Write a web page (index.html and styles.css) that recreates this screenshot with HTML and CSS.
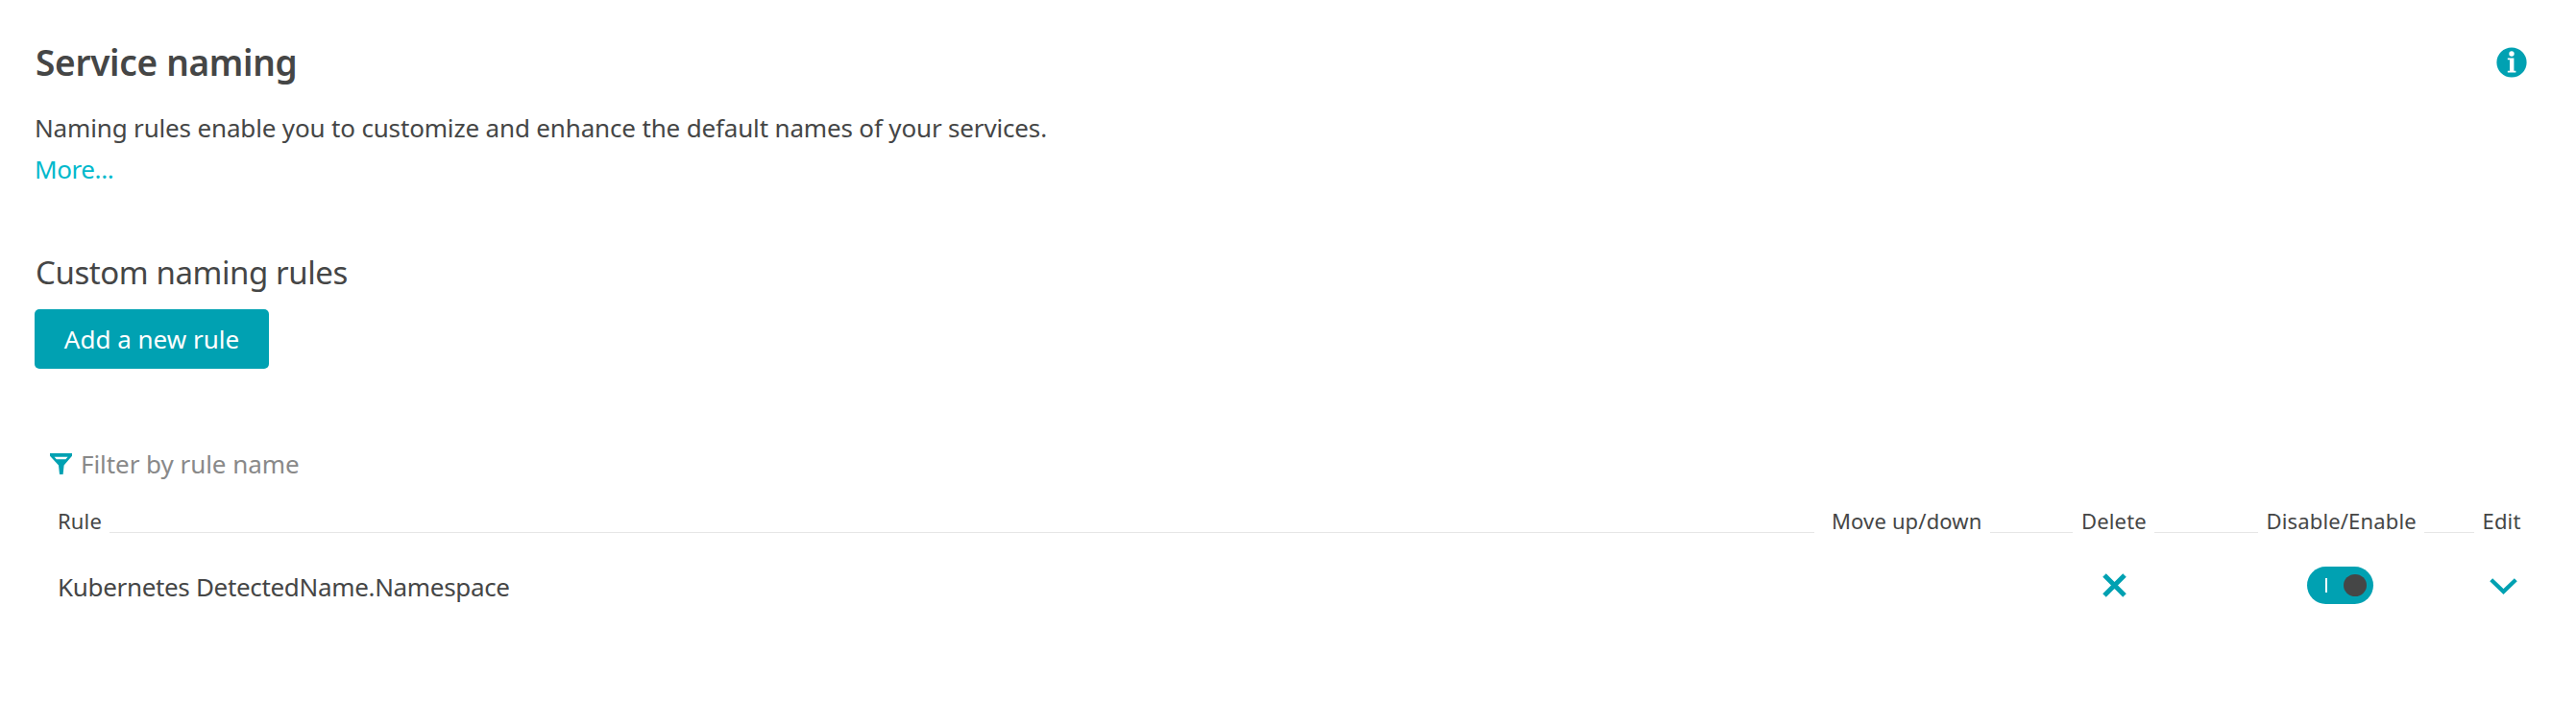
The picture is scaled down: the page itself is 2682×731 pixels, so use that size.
FILE: index.html
```html
<!DOCTYPE html>
<html lang="en">
<head>
<meta charset="utf-8">
<title>Service naming</title>
<link rel="stylesheet" href="styles.css">
</head>
<body>
<main class="page">
  <header class="page-header">
    <h1 class="title">Service naming</h1>
    <svg class="info" viewBox="0 0 32 32" aria-label="Information">
      <circle cx="16" cy="16" r="15.6" fill="#00a1b2"/>
      <circle cx="16" cy="7" r="2.7" fill="#fff"/>
      <path fill="#fff" d="M11.8 11.5h6.6v13.2h2v1.8h-8.6v-1.8h2.2V13.2h-2.2z"/>
    </svg>
  </header>
  <p class="description">Naming rules enable you to customize and enhance the default names of your services.</p>
  <a class="more">More...</a>

  <h2 class="subtitle">Custom naming rules</h2>
  <button class="add" type="button">Add a new rule</button>

  <div class="filter">
    <svg class="filter-icon" viewBox="0 0 23 22">
      <path fill="#00a1b2" fill-rule="evenodd" d="M0 0h23v2.8L14.6 12.5L13.6 22H10L9 12.5L0 2.8zM4.6 3.7l2.2 2.6h9.6l2.2-2.6z"/>
    </svg>
    <span class="filter-text">Filter by rule name</span>
  </div>

  <section class="table">
    <div class="row head">
      <div class="cell rule">Rule</div>
      <div class="cell move">Move up/down</div>
      <div class="cell delete">Delete</div>
      <div class="cell toggle-col">Disable/Enable</div>
      <div class="cell edit">Edit</div>
    </div>
    <div class="row item">
      <div class="name">Kubernetes DetectedName.Namespace</div>
      <div></div>
      <div class="action delete-action">
        <svg class="cross" viewBox="0 0 25 25"><path d="M2 2l21 21M23 2L2 23" stroke="#00a1b2" stroke-width="5" fill="none"/></svg>
      </div>
      <div class="action toggle-action">
        <div class="toggle"><span class="bar"></span><span class="knob"></span></div>
      </div>
      <div class="action edit-action">
        <svg class="chevron" viewBox="0 0 29 17"><path d="M1.7 1.7L14.5 14L27.3 1.7" stroke="#00a1b2" stroke-width="4.2" fill="none"/></svg>
      </div>
    </div>
  </section>
</main>
</body>
</html>
```
FILE: styles.css
```css
* { box-sizing: border-box; }
body {
  margin: 0;
  background: #fff;
  color: #454646;
  font-family: "Noto Sans", sans-serif;
  font-size: 26px;
}
.page { padding: 40px 51px 0 36px; height: 731px; }
.page-header { display: flex; justify-content: space-between; height: 50px; }
.title {
  margin: 0 0 0 1px;
  font-size: 37px;
  line-height: 50px;
  font-weight: 600;
  letter-spacing: -0.3px;
}
.info { width: 32px; height: 32px; margin: 9px 0 0; }
.description {
  margin: 22px 0 0;
  line-height: 43px;
  letter-spacing: -0.16px;
}
.more { display: block; line-height: 43px; color: #00b9cc; letter-spacing: -0.4px; }
.subtitle {
  margin: 63px 0 0 1px;
  font-size: 33px;
  line-height: 46px;
  font-weight: 400;
  letter-spacing: -0.42px;
}
.add {
  display: block;
  width: 244px;
  height: 62px;
  margin-top: 15px;
  padding: 0;
  border: 0;
  border-radius: 5px;
  background: #00a1b2;
  color: #fff;
  font: inherit;
  line-height: 62px;
}
.filter {
  display: flex;
  gap: 9px;
  margin: 81px 0 0 16px;
  line-height: 36px;
  color: #898989;
  letter-spacing: -0.05px;
}
.filter-icon { width: 23px; height: 22px; margin-top: 7px; }
.row {
  display: grid;
  grid-template-columns: 1847px 260px 192.5px 225px 40px;
  margin-left: 24px;
}
.head { margin-top: 26px; font-size: 22px; line-height: 30px; letter-spacing: 0.15px; }
.cell { display: flex; white-space: nowrap; }
.cell::after {
  content: "";
  flex: 1;
  height: 1px;
  margin: 27px 9px 0 8px;
  background: #e6e6e6;
}
.rule::after { margin-right: 18px; }
.edit::after { display: none; }
.item { height: 40px; margin-top: 31px; }
.name { line-height: 40px; padding-top: 3px; letter-spacing: -0.33px; }
.action { display: flex; align-items: center; justify-content: center; }
.delete-action { width: 68px; }
.toggle-action { width: 154px; }
.cross { width: 25px; height: 25px; }
.toggle {
  display: flex;
  align-items: center;
  justify-content: space-between;
  width: 69px;
  height: 39px;
  padding: 0 7px 0 19px;
  border-radius: 20px;
  background: #00a1b2;
}
.bar { width: 2px; height: 15px; background: #fff; }
.knob { width: 24px; height: 23px; border-radius: 50%; background: #454646; }
.edit-action { width: 43px; }
.chevron { width: 29px; height: 17px; margin-top: 2px; }
```
